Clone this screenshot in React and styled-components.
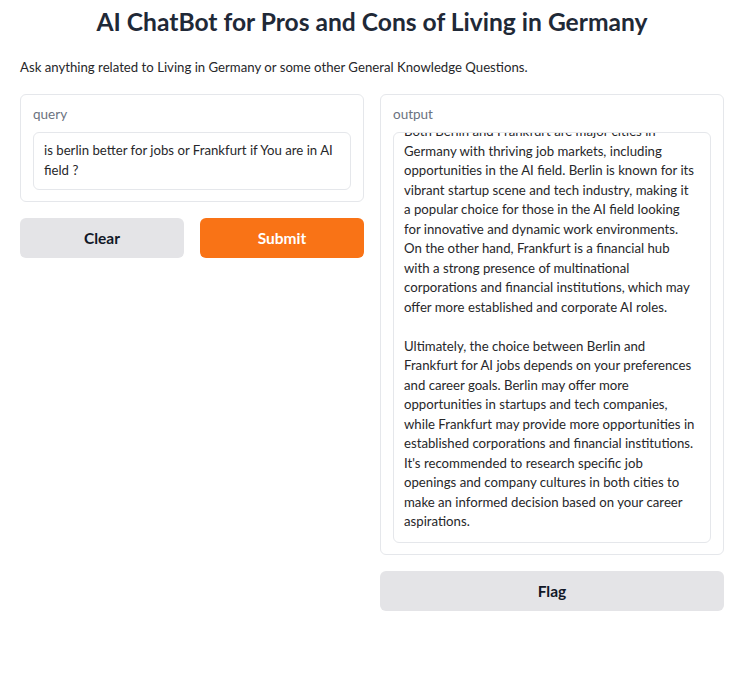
import React, { useLayoutEffect, useRef } from "react";
import styled, { createGlobalStyle } from "styled-components";

const Global = createGlobalStyle`
  html, body { margin: 0; padding: 0; background: #ffffff; }
  body { font-family: Lato, "Noto Sans", sans-serif; color: #27272a; }
  * { box-sizing: border-box; }
`;

const Page = styled.div`
  width: 704px;
  margin-left: 20px;
  display: flex;
  flex-direction: column;
`;

const Title = styled.h1`
  margin: 6px 0 0;
  text-align: center;
  font-size: 24.6px;
  line-height: 32px;
  font-weight: 700;
  color: #1f2937;
`;

const Description = styled.p`
  margin: 20px 0 0;
  font-size: 13.2px;
  line-height: 18px;
  color: #27272a;
`;

const Columns = styled.div`
  margin-top: 18px;
  display: grid;
  grid-template-columns: 344px 344px;
  gap: 16px;
  align-items: start;
`;

const Column = styled.div`
  display: flex;
  flex-direction: column;
  gap: 16px;
`;

const Block = styled.div`
  border: 1px solid #e5e7eb;
  border-radius: 6px;
  padding: 11px 12px 11px;
  background: #fff;
  display: flex;
  flex-direction: column;
`;

const Label = styled.span`
  font-size: 13.5px;
  line-height: 16px;
  color: #6b7280;
  margin-bottom: 10px;
`;

const Area = styled.textarea`
  display: block;
  width: 100%;
  height: ${(p) => p.$h}px;
  resize: none;
  border: 1px solid #e5e7eb;
  border-radius: 6px;
  padding: 8px 10px ${(p) => (p.$scroll ? 10 : 8)}px;
  font-family: Lato, "Noto Sans", sans-serif;
  font-size: 13.2px;
  line-height: ${(p) => (p.$scroll ? 19.5 : 19.6)}px;
  color: #27272a;
  background: #fff;
  outline: none;
  overflow: hidden;
  white-space: ${(p) => (p.$scroll ? "pre" : "pre-wrap")};
`;

const ButtonRow = styled.div`
  display: grid;
  grid-template-columns: 1fr 1fr;
  gap: 16px;
`;

const Button = styled.button`
  height: 40px;
  border: none;
  border-radius: 6px;
  font-family: Lato, "Noto Sans", sans-serif;
  font-size: 15.5px;
  font-weight: 700;
  cursor: pointer;
  background: ${(p) => (p.$primary ? "#f97316" : "#e4e4e7")};
  color: ${(p) => (p.$primary ? "#ffffff" : "#111827")};
`;

const OUTPUT = `Both Berlin and Frankfurt are major cities in
Germany with thriving job markets, including
opportunities in the AI field. Berlin is known for its
vibrant startup scene and tech industry, making it
a popular choice for those in the AI field looking
for innovative and dynamic work environments.
On the other hand, Frankfurt is a financial hub
with a strong presence of multinational
corporations and financial institutions, which may
offer more established and corporate AI roles.

Ultimately, the choice between Berlin and
Frankfurt for AI jobs depends on your preferences
and career goals. Berlin may offer more
opportunities in startups and tech companies,
while Frankfurt may provide more opportunities in
established corporations and financial institutions.
It's recommended to research specific job
openings and company cultures in both cities to
make an informed decision based on your career
aspirations.`;

export default function App() {
  const outRef = useRef(null);
  useLayoutEffect(() => {
    const el = outRef.current;
    if (el) el.scrollTop = el.scrollHeight;
  }, []);
  return (
    <>
      <Global />
      <Page>
        <Title>AI ChatBot for Pros and Cons of Living in Germany</Title>
        <Description>
          Ask anything related to Living in Germany or some other General Knowledge Questions.
        </Description>
        <Columns>
          <Column>
            <Block>
              <Label>query</Label>
              <Area
                $h={58}
                readOnly
                defaultValue="is berlin better for jobs or Frankfurt if You are in AI field ?"
              />
            </Block>
            <ButtonRow>
              <Button>Clear</Button>
              <Button $primary>Submit</Button>
            </ButtonRow>
          </Column>
          <Column>
            <Block>
              <Label>output</Label>
              <Area ref={outRef} $h={411} $scroll readOnly defaultValue={OUTPUT} />
            </Block>
            <Button>Flag</Button>
          </Column>
        </Columns>
      </Page>
    </>
  );
}
